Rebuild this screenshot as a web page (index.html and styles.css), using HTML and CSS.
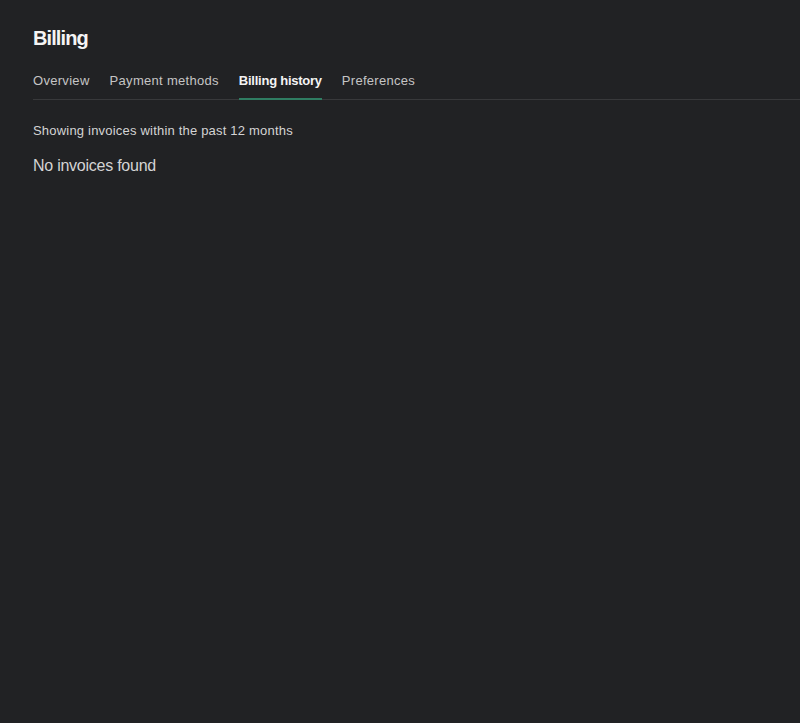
FILE: index.html
```html
<!DOCTYPE html>
<html lang="en">
<head>
    <meta charset="UTF-8">
    <meta name="viewport" content="width=device-width, initial-scale=1.0">
    <title>Billing</title>
    <link rel="stylesheet" href="styles.css">
</head>
<body>
    <main class="billing">
        <h1 class="billing-title">Billing</h1>
        <nav class="tabs">
            <a class="tab" href="#">Overview</a>
            <a class="tab" href="#">Payment methods</a>
            <a class="tab active" href="#">Billing history</a>
            <a class="tab" href="#">Preferences</a>
        </nav>
        <section class="history">
            <p class="history-note">Showing invoices within the past 12 months</p>
            <p class="history-empty">No invoices found</p>
        </section>
    </main>
</body>
</html>
```

FILE: styles.css
```css
* {
    margin: 0;
    padding: 0;
    box-sizing: border-box;
}

body {
    font-family: "Liberation Sans", Arial, sans-serif;
    background-color: #212224;
    color: #ececec;
    min-height: 100vh;
}

.billing {
    padding: 26px 0 0 33px;
}

.billing-title {
    font-size: 20px;
    font-weight: bold;
    color: #f4f4f4;
    line-height: 24px;
    letter-spacing: -0.9px;
}

.tabs {
    display: flex;
    gap: 20px;
    margin-top: 23px;
    border-bottom: 1px solid #38393b;
}

.tab {
    color: #c5c5c5;
    text-decoration: none;
    font-size: 13px;
    line-height: 16px;
    letter-spacing: 0.3px;
    padding-bottom: 9px;
    border-bottom: 2px solid transparent;
    margin-bottom: -1px;
}

.tab.active {
    color: #f4f4f4;
    font-weight: bold;
    letter-spacing: -0.25px;
    border-bottom-color: #2f7d62;
}

.history {
    padding-top: 23px;
}

.history-note {
    font-size: 13px;
    line-height: 16px;
    letter-spacing: 0.2px;
    color: #d4d4d4;
}

.history-empty {
    margin-top: 17px;
    font-size: 16px;
    line-height: 20px;
    letter-spacing: -0.25px;
    color: #d4d4d4;
}
```
